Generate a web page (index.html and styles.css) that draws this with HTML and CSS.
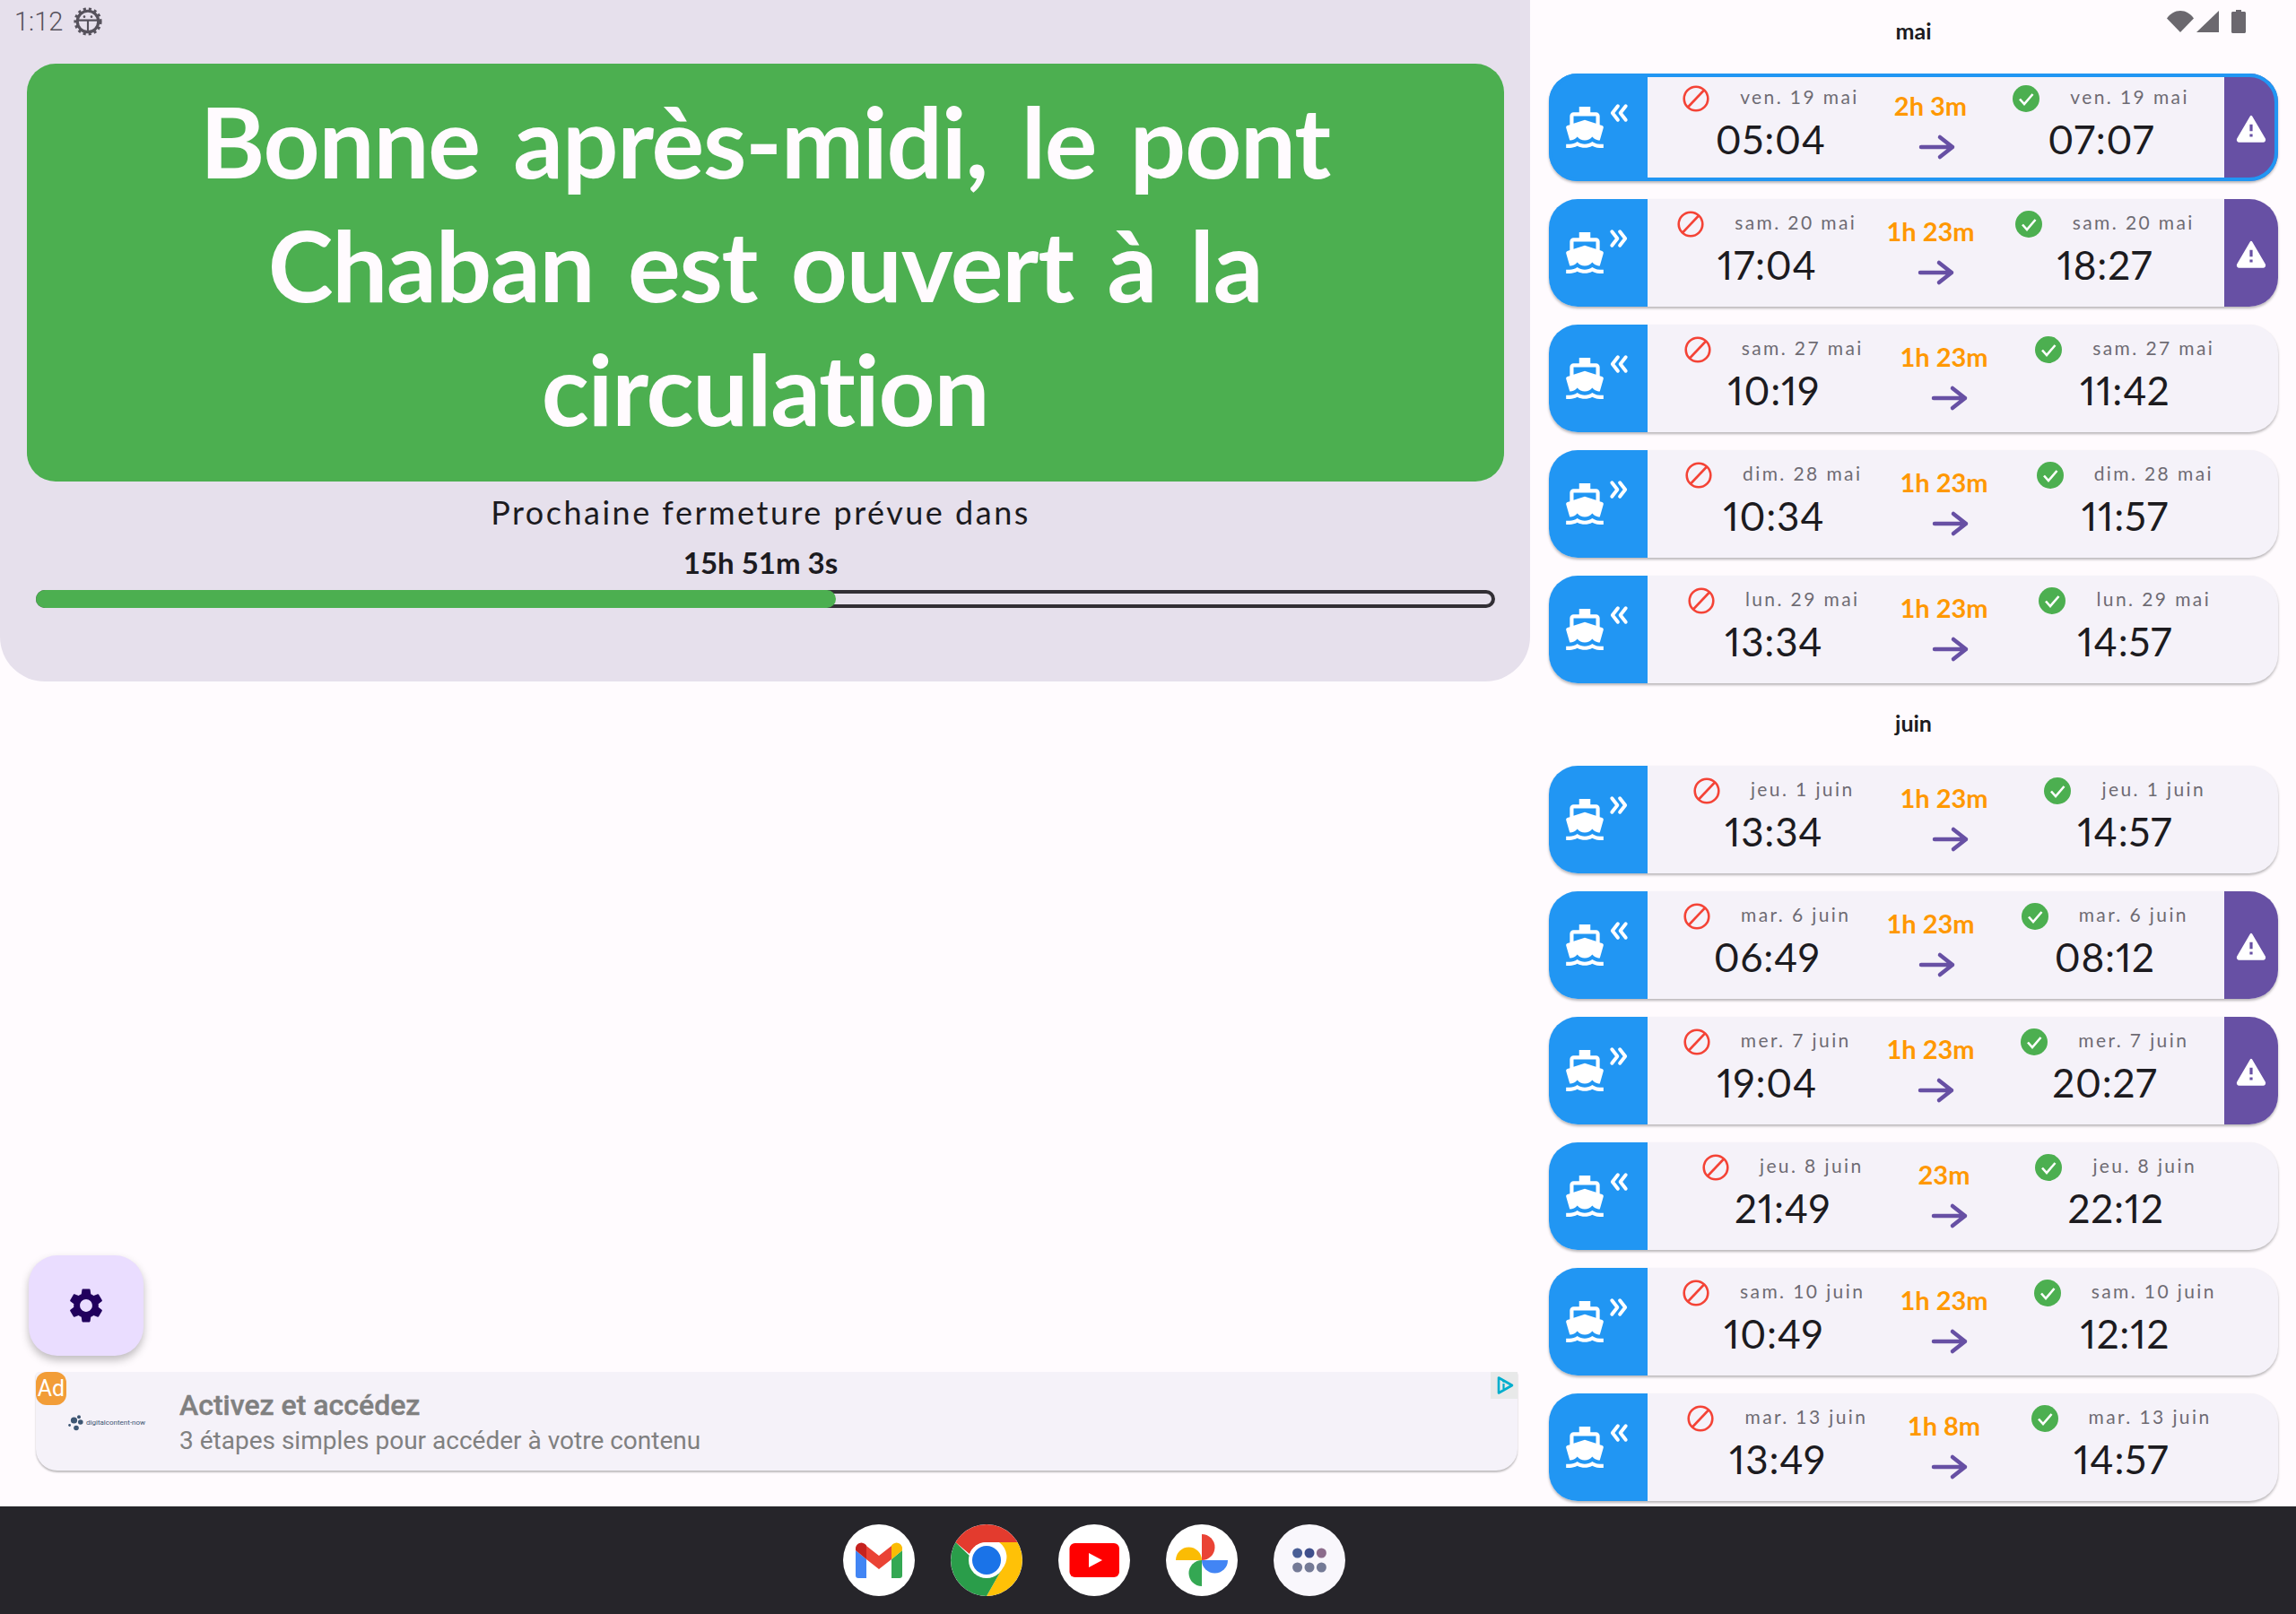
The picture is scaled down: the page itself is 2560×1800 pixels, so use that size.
FILE: index.html
```html
<!DOCTYPE html>
<html lang="fr">
<head>
<meta charset="utf-8">
<title>Pont Chaban</title>
<link rel="stylesheet" href="styles.css">
</head>
<body>
<svg class="defs" width="0" height="0">
  <defs>
    <symbol id="boat" viewBox="0 0 24 24"><path fill="#fff" d="M20 21c-1.390 0-2.780-.47-4-1.320-2.440 1.710-5.560 1.710-8 0C6.780 20.530 5.390 21 4 21H2v2h2c1.380 0 2.740-.35 4-.99 2.520 1.290 5.480 1.290 8 0 1.260.65 2.620.99 4 .99h2v-2h-2zM3.950 19H4c1.600 0 3.020-.88 4-2 .98 1.120 2.400 2 4 2s3.020-.88 4-2c.98 1.120 2.400 2 4 2h.05l1.890-6.680c.08-.26.060-.54-.060-.78s-.34-.42-.6-.5L20 10.620V6c0-1.100-.9-2-2-2h-3V1H9v3H6c-1.100 0-2 .9-2 2v4.620l-1.290.42c-.26.080-.48.260-.6.500s-.15.520-.06.780L3.950 19zM6 6h12v3.970L12 8 6 9.970V6z"/></symbol>
    <symbol id="no" viewBox="0 0 30 30"><circle cx="15" cy="15" r="13.300" fill="none" stroke="#F44336" stroke-width="2.600"/><path d="M6 24.500 24 5.500" stroke="#F44336" stroke-width="2.600"/></symbol>
    <symbol id="ok" viewBox="0 0 30 30"><circle cx="15" cy="15" r="15" fill="#4CAF50"/><path d="M8 15.500l5 5.500 9.500-11" fill="none" stroke="#fff" stroke-width="2.600"/></symbol>
    <symbol id="arr" viewBox="0 0 42 30"><path d="M3 15h35M24 4l14 11-14 11" fill="none" stroke="#6750A4" stroke-width="4.500" stroke-linecap="round" stroke-linejoin="round"/></symbol>
    <symbol id="warn" viewBox="0 0 32 30"><path d="M16 3 29.800 26.500c.5 1-.2 2-1.300 2H3.500c-1.100 0-1.800-1-1.300-2z" fill="#fff" stroke="#fff" stroke-width="2.500" stroke-linejoin="round"/><path d="M14.500 11h3v7h-3zM14.500 21h3v3h-3z" fill="#6750A4"/></symbol>
    <symbol id="left" viewBox="0 0 20 20"><path d="M9 3 3.500 10 9 17M17 3l-5.500 7 5.500 7" fill="none" stroke="#fff" stroke-width="3.600" stroke-linecap="round" stroke-linejoin="round"/></symbol>
    <symbol id="right" viewBox="0 0 20 20"><path d="M3 3l5.500 7L3 17M11 3l5.500 7L11 17" fill="none" stroke="#fff" stroke-width="3.600" stroke-linecap="round" stroke-linejoin="round"/></symbol>
  </defs>
</svg>

<div class="status">
  <div class="status-left">
    <span class="clock">1:12</span>
    <svg class="bug" viewBox="0 0 24 24"><circle cx="12" cy="12" r="8.800" fill="none" stroke="#56525C" stroke-width="2.400"/><circle cx="12" cy="12" r="10.200" fill="none" stroke="#56525C" stroke-width="3" stroke-dasharray="2.200 2.200"/><path d="M3.500 11h17M12 11v9" stroke="#56525C" stroke-width="1.600"/><circle cx="9" cy="8" r="1" fill="#56525C"/><circle cx="15" cy="8" r="1" fill="#56525C"/></svg>
  </div>
  <div class="status-right">
    <svg class="st-wifi" viewBox="0 0 30 24"><path d="M0 8.500C4 3 9 0 15 0s11 3 15 8.500L15 24z" fill="#6B686E"/></svg>
    <svg class="st-signal" viewBox="0 0 25 24"><path d="M25 0v24H0z" fill="#6B686E"/></svg>
    <svg class="st-batt" viewBox="0 0 16 26"><path d="M5 0h6v2h3.500c.8 0 1.500.7 1.500 1.500v21c0 .8-.7 1.500-1.500 1.500h-13C.7 26 0 25.300 0 24.500v-21C0 2.700.7 2 1.500 2H5z" fill="#6B686E"/></svg>
  </div>
</div>

<main class="main">
  <section class="left">
    <div class="panel">
      <div class="hero">Bonne après-midi, le pont Chaban est ouvert à la circulation</div>
      <div class="next">Prochaine fermeture prévue dans</div>
      <div class="count">15h 51m 3s</div>
      <div class="bar"><div class="fill"></div></div>
    </div>
    <div class="spacer"></div>
    <button class="fab"><svg viewBox="0 0 24 24"><path fill="#21005D" d="M19.140 12.940c.04-.3.060-.61.060-.94 0-.32-.02-.64-.07-.94l2.030-1.580a.49.49 0 0 0 .12-.61l-1.920-3.320a.488.488 0 0 0-.59-.22l-2.390.96c-.5-.38-1.030-.7-1.620-.94l-.36-2.540a.484.484 0 0 0-.48-.41h-3.840c-.24 0-.43.170-.47.41l-.36 2.540c-.59.24-1.130.57-1.620.94l-2.390-.96c-.22-.08-.47 0-.59.22L2.740 8.870c-.12.21-.08.47.12.61l2.030 1.580c-.05.3-.09.63-.09.94s.02.640.07.940l-2.030 1.580a.49.49 0 0 0-.12.610l1.920 3.320c.12.220.37.290.59.220l2.390-.96c.5.380 1.030.7 1.620.94l.36 2.540c.05.240.24.410.48.410h3.840c.24 0 .44-.170.47-.41l.36-2.540c.59-.24 1.130-.56 1.620-.94l2.390.96c.22.080.47 0 .59-.22l1.920-3.320c.12-.22.070-.47-.12-.61l-2.010-1.580zM12 15.600c-1.980 0-3.600-1.620-3.600-3.600s1.620-3.600 3.600-3.600 3.600 1.620 3.600 3.600-1.620 3.600-3.600 3.600z"/></svg></button>
    <div class="ad">
      <span class="ad-badge">Ad</span>
      <div class="ad-choice"><svg viewBox="0 0 20 22"><path d="M3 2.500v17L18 11z" fill="none" stroke="#00AECD" stroke-width="2.600" stroke-linejoin="round"/><path d="M8.500 9v6" stroke="#00AECD" stroke-width="2.200"/><circle cx="8.500" cy="6.500" r="1.300" fill="#00AECD"/></svg></div>
      <div class="ad-logo">
        <svg viewBox="0 0 17 18"><g fill="#3D5673"><circle cx="12" cy="2.200" r="2"/><circle cx="6.500" cy="6" r="3.600"/><circle cx="13.800" cy="8" r="2.800"/><circle cx="1.600" cy="11.500" r="1.400"/><circle cx="9" cy="14.500" r="2.800"/></g></svg>
        <span>digitalcontent<i>-</i>now</span>
      </div>
      <div class="ad-text">
        <div class="ad-title">Activez et accédez</div>
        <div class="ad-sub">3 étapes simples pour accéder à votre contenu</div>
      </div>
    </div>
  </section>

  <section class="right">
    <div class="month first">mai</div>
    <article class="card sel warned"><div class="side"><svg class="boat"><use href="#boat"/></svg><svg class="dir"><use href="#left"/></svg></div><div class="mid"><div class="block"><div class="top"><svg class="ic"><use href="#no"/></svg><span class="date">ven. 19 mai</span></div><div class="time">05:04</div></div><div class="dur"><div class="len">2h 3m</div><svg class="arrow"><use href="#arr"/></svg></div><div class="block"><div class="top"><svg class="ic"><use href="#ok"/></svg><span class="date">ven. 19 mai</span></div><div class="time">07:07</div></div></div><div class="alert"><svg><use href="#warn"/></svg></div></article>
    <article class="card warned"><div class="side"><svg class="boat"><use href="#boat"/></svg><svg class="dir"><use href="#right"/></svg></div><div class="mid"><div class="block"><div class="top"><svg class="ic"><use href="#no"/></svg><span class="date">sam. 20 mai</span></div><div class="time">17:04</div></div><div class="dur"><div class="len">1h 23m</div><svg class="arrow"><use href="#arr"/></svg></div><div class="block"><div class="top"><svg class="ic"><use href="#ok"/></svg><span class="date">sam. 20 mai</span></div><div class="time">18:27</div></div></div><div class="alert"><svg><use href="#warn"/></svg></div></article>
    <article class="card"><div class="side"><svg class="boat"><use href="#boat"/></svg><svg class="dir"><use href="#left"/></svg></div><div class="mid"><div class="block"><div class="top"><svg class="ic"><use href="#no"/></svg><span class="date">sam. 27 mai</span></div><div class="time">10:19</div></div><div class="dur"><div class="len">1h 23m</div><svg class="arrow"><use href="#arr"/></svg></div><div class="block"><div class="top"><svg class="ic"><use href="#ok"/></svg><span class="date">sam. 27 mai</span></div><div class="time">11:42</div></div></div></article>
    <article class="card"><div class="side"><svg class="boat"><use href="#boat"/></svg><svg class="dir"><use href="#right"/></svg></div><div class="mid"><div class="block"><div class="top"><svg class="ic"><use href="#no"/></svg><span class="date">dim. 28 mai</span></div><div class="time">10:34</div></div><div class="dur"><div class="len">1h 23m</div><svg class="arrow"><use href="#arr"/></svg></div><div class="block"><div class="top"><svg class="ic"><use href="#ok"/></svg><span class="date">dim. 28 mai</span></div><div class="time">11:57</div></div></div></article>
    <article class="card"><div class="side"><svg class="boat"><use href="#boat"/></svg><svg class="dir"><use href="#left"/></svg></div><div class="mid"><div class="block"><div class="top"><svg class="ic"><use href="#no"/></svg><span class="date">lun. 29 mai</span></div><div class="time">13:34</div></div><div class="dur"><div class="len">1h 23m</div><svg class="arrow"><use href="#arr"/></svg></div><div class="block"><div class="top"><svg class="ic"><use href="#ok"/></svg><span class="date">lun. 29 mai</span></div><div class="time">14:57</div></div></div></article>
    <div class="month">juin</div>
    <article class="card"><div class="side"><svg class="boat"><use href="#boat"/></svg><svg class="dir"><use href="#right"/></svg></div><div class="mid"><div class="block"><div class="top"><svg class="ic"><use href="#no"/></svg><span class="date">jeu. 1 juin</span></div><div class="time">13:34</div></div><div class="dur"><div class="len">1h 23m</div><svg class="arrow"><use href="#arr"/></svg></div><div class="block"><div class="top"><svg class="ic"><use href="#ok"/></svg><span class="date">jeu. 1 juin</span></div><div class="time">14:57</div></div></div></article>
    <article class="card warned"><div class="side"><svg class="boat"><use href="#boat"/></svg><svg class="dir"><use href="#left"/></svg></div><div class="mid"><div class="block"><div class="top"><svg class="ic"><use href="#no"/></svg><span class="date">mar. 6 juin</span></div><div class="time">06:49</div></div><div class="dur"><div class="len">1h 23m</div><svg class="arrow"><use href="#arr"/></svg></div><div class="block"><div class="top"><svg class="ic"><use href="#ok"/></svg><span class="date">mar. 6 juin</span></div><div class="time">08:12</div></div></div><div class="alert"><svg><use href="#warn"/></svg></div></article>
    <article class="card warned"><div class="side"><svg class="boat"><use href="#boat"/></svg><svg class="dir"><use href="#right"/></svg></div><div class="mid"><div class="block"><div class="top"><svg class="ic"><use href="#no"/></svg><span class="date">mer. 7 juin</span></div><div class="time">19:04</div></div><div class="dur"><div class="len">1h 23m</div><svg class="arrow"><use href="#arr"/></svg></div><div class="block"><div class="top"><svg class="ic"><use href="#ok"/></svg><span class="date">mer. 7 juin</span></div><div class="time">20:27</div></div></div><div class="alert"><svg><use href="#warn"/></svg></div></article>
    <article class="card"><div class="side"><svg class="boat"><use href="#boat"/></svg><svg class="dir"><use href="#left"/></svg></div><div class="mid"><div class="block"><div class="top"><svg class="ic"><use href="#no"/></svg><span class="date">jeu. 8 juin</span></div><div class="time">21:49</div></div><div class="dur"><div class="len">23m</div><svg class="arrow"><use href="#arr"/></svg></div><div class="block"><div class="top"><svg class="ic"><use href="#ok"/></svg><span class="date">jeu. 8 juin</span></div><div class="time">22:12</div></div></div></article>
    <article class="card"><div class="side"><svg class="boat"><use href="#boat"/></svg><svg class="dir"><use href="#right"/></svg></div><div class="mid"><div class="block"><div class="top"><svg class="ic"><use href="#no"/></svg><span class="date">sam. 10 juin</span></div><div class="time">10:49</div></div><div class="dur"><div class="len">1h 23m</div><svg class="arrow"><use href="#arr"/></svg></div><div class="block"><div class="top"><svg class="ic"><use href="#ok"/></svg><span class="date">sam. 10 juin</span></div><div class="time">12:12</div></div></div></article>
    <article class="card"><div class="side"><svg class="boat"><use href="#boat"/></svg><svg class="dir"><use href="#left"/></svg></div><div class="mid"><div class="block"><div class="top"><svg class="ic"><use href="#no"/></svg><span class="date">mar. 13 juin</span></div><div class="time">13:49</div></div><div class="dur"><div class="len">1h 8m</div><svg class="arrow"><use href="#arr"/></svg></div><div class="block"><div class="top"><svg class="ic"><use href="#ok"/></svg><span class="date">mar. 13 juin</span></div><div class="time">14:57</div></div></div></article>
  </section>
</main>

<nav class="dock">
  <div class="app"><svg viewBox="0 0 80 80"><path d="M14 29 26 39V60H17a3 3 0 0 1-3-3z" fill="#4285F4"/><path d="M66 29 54 39V60H63a3 3 0 0 0 3-3z" fill="#34A853"/><path d="M26 24 40 35 54 24V39L40 50 26 39z" fill="#EA4335"/><path d="M14 26a6.500 6.500 0 0 1 10.500-4L26 23.500V39L14 29z" fill="#C5221F"/><path d="M66 26a6.500 6.500 0 0 0-10.500-4L54 23.500V39L66 29z" fill="#FBBC04"/></svg></div>
  <div class="app"><svg viewBox="0 0 80 80"><path d="M40 0a40 40 0 0 1 34.600 20H40a20 20 0 0 0-19 13L5.400 20A40 40 0 0 1 40 0z" fill="#E33B2E"/><path d="M74.600 20A40 40 0 0 1 40 80l17-30a20 20 0 0 0-3-30z" fill="#FFC107"/><path d="M5.400 20A40 40 0 0 0 40 80l17-30a20 20 0 0 1-36-15z" fill="#2A9D4A"/><circle cx="40" cy="40" r="20" fill="#fff"/><circle cx="40" cy="40" r="16" fill="#1A73E8"/></svg></div>
  <div class="app"><svg viewBox="0 0 80 80"><rect x="12.500" y="21" width="55.500" height="38" rx="6" fill="#F00"/><path d="M34 32v16l15-8z" fill="#fff"/></svg></div>
  <div class="app"><svg viewBox="0 0 80 80"><path d="M40 11a14.500 14.500 0 0 1 0 29z" fill="#EA4335"/><path d="M40 40h29a14.500 14.500 0 0 1-29 0z" fill="#4285F4"/><path d="M40 40v29a14.500 14.500 0 0 1 0-29z" fill="#34A853"/><path d="M11 40a14.500 14.500 0 0 1 29 0z" fill="#FBBC04"/></svg></div>
  <div class="app apps"><svg viewBox="0 0 80 80"><circle cx="26.600" cy="32" r="5.500" fill="#4A5F96"/><circle cx="40" cy="32" r="5.500" fill="#3F4F8C"/><circle cx="53.400" cy="32" r="5.500" fill="#8C6C8C"/><circle cx="26.600" cy="48" r="5.500" fill="#747A96"/><circle cx="40" cy="48" r="5.500" fill="#747A96"/><circle cx="53.400" cy="48" r="5.500" fill="#747A96"/></svg></div>
</nav>
</body>
</html>
```

FILE: styles.css
```css
* { box-sizing: border-box; }
html, body { margin: 0; padding: 0; }
body {
  position: relative;
  width: 2560px;
  height: 1800px;
  display: flex;
  flex-direction: column;
  background: #FFFBFE;
  font-family: "Lato", "Noto Sans", sans-serif;
  font-variant-ligatures: none;
  color: #1C1B1F;
  overflow: hidden;
}
.defs { position: absolute; }

/* status bar overlay */
.status {
  position: absolute;
  top: 0; left: 0; right: 0;
  height: 48px;
  display: flex;
  justify-content: space-between;
  z-index: 3;
}
.status-left { display: flex; align-items: center; gap: 12px; padding-left: 16px; height: 48px; }
.clock { font-family: "Roboto", sans-serif; font-weight: 300; font-size: 29px; color: #56525C; }
.bug { width: 32px; height: 32px; }
.status-right { display: flex; align-items: flex-start; padding: 11px 56px 0 0; }
.st-wifi { width: 30px; height: 24px; margin: 1px 3px 0 0; }
.st-signal { width: 25px; height: 24px; margin: 1px 14px 0 0; }
.st-batt { width: 16px; height: 26px; }

.main { height: 1680px; flex: none; display: flex; }

/* left column */
.left { width: 1706px; flex: none; display: flex; flex-direction: column; }
.panel {
  height: 760px;
  flex: none;
  background: #E6E0EC;
  border-radius: 0 0 50px 50px;
  padding: 71px 30px 0;
  display: flex;
  flex-direction: column;
  align-items: center;
}
.hero {
  width: 1647px;
  height: 466px;
  flex: none;
  background: #4CAF50;
  border-radius: 32px;
  color: #FFFBFE;
  font-size: 110px;
  font-weight: 700;
  letter-spacing: -1.200px;
  word-spacing: 12px;
  line-height: 138px;
  text-align: center;
  padding: 16px 90px 0;
}
.next { margin: 10px 10px 0 0; font-size: 36px; line-height: 48px; letter-spacing: 2.500px; }
.count { margin: 10px 10px 0 0; font-size: 33px; line-height: 44px; font-weight: 700; }
.bar {
  margin-top: 9px;
  width: 1627px;
  height: 20px;
  flex: none;
  border: 4px solid #322F35;
  border-radius: 10px;
  position: relative;
}
.fill {
  position: absolute;
  left: -4px; top: -4px; bottom: -4px;
  width: 892px;
  background: #4CAF50;
  border-radius: 10px;
}
.spacer { flex: 1; }
.fab {
  align-self: flex-start;
  margin-left: 32px;
  width: 128px;
  height: 112px;
  flex: none;
  border: 0;
  padding: 0;
  border-radius: 32px;
  background: #EADDFF;
  box-shadow: 0 5px 10px rgba(0,0,0,.25);
  display: flex;
  align-items: center;
  justify-content: center;
}
.fab svg { width: 46px; height: 46px; }
.ad {
  position: relative;
  margin: 18px 14px 40px 40px;
  height: 110px;
  flex: none;
  background: #F5F2F9;
  border-radius: 4px 0 24px 24px;
  box-shadow: 0 2px 2px rgba(0,0,0,.25);
  display: flex;
  align-items: center;
  color: #808080;
  font-family: "Roboto", sans-serif;
}
.ad-badge {
  position: absolute;
  left: 0; top: 0;
  width: 34px; height: 37px;
  border-radius: 12px;
  background: #F29D38;
  color: #fff;
  font-size: 25px;
  line-height: 37px;
  text-align: center;
}
.ad-choice {
  position: absolute;
  right: 0; top: 0;
  width: 30px; height: 30px;
  background: #E8E9E9;
  padding: 4px 4px 4px 6px;
}
.ad-choice svg { display: block; width: 20px; height: 22px; }
.ad-logo { width: 160px; flex: none; padding-left: 36px; padding-top: 3px; display: flex; align-items: center; gap: 3px; font-size: 8px; color: #3D5673; white-space: nowrap; }
.ad-logo svg { width: 17px; height: 18px; flex: none; }
.ad-logo i { font-style: normal; }
.ad-title { font-size: 32px; font-weight: 500; -webkit-text-stroke: .4px #808080; line-height: 40px; margin-top: 2px; }
.ad-sub { font-size: 28px; line-height: 36px; margin-top: 2px; }

/* right column */
.right { flex: 1; padding: 0 20px 0 21px; display: flex; flex-direction: column; gap: 20px; min-width: 0; }
.month { height: 52px; flex: none; line-height: 26px; padding-top: 11px; text-align: center; font-weight: 700; font-size: 25px; }
.month.first { height: 62px; padding-top: 21px; }
.card {
  height: 120px;
  flex: none;
  display: flex;
  background: #F5F2F9;
  border-radius: 32px;
  box-shadow: 0 2px 3px rgba(0,0,0,.28);
  position: relative;
}
.card.sel::after {
  content: "";
  position: absolute;
  inset: 0;
  border: 4px solid #2196F3;
  border-radius: 32px;
}
.side { width: 110px; flex: none; background: #2196F3; position: relative; border-radius: 32px 0 0 32px; }
.boat { position: absolute; left: 15px; top: 35px; width: 50px; height: 50px; }
.dir { position: absolute; left: 67px; top: 33px; width: 22px; height: 22px; }
.mid { flex: 1; display: flex; justify-content: space-evenly; align-items: stretch; min-width: 0; padding-right: 30px; }
.warned .mid { padding-right: 0; }
.alert { width: 60px; flex: none; background: #6750A4; display: flex; align-items: center; justify-content: center; border-radius: 0 32px 32px 0; }
.alert svg { width: 34px; height: 32px; margin-top: 2px; }
.block { display: flex; flex-direction: column; align-items: center; }
.top { display: flex; align-items: center; gap: 34px; height: 30px; margin-top: 13px; }
.ic { width: 30px; height: 30px; flex: none; }
.date { font-size: 21px; letter-spacing: 2.400px; color: #6E6B73; white-space: nowrap; margin-top: -5px; }
.time { font-size: 44px; line-height: 52px; margin-top: 4px; letter-spacing: .8px; font-variant-numeric: proportional-nums; }
.dur { display: flex; flex-direction: column; align-items: center; margin-right: 12px; }
.len { margin-top: 18px; font-size: 29px; line-height: 36px; font-weight: 700; color: #FF9800; white-space: nowrap; }
.arrow { margin: 13px 0 0 14px; width: 42px; height: 30px; }

/* dock */
.dock {
  height: 120px;
  flex: none;
  background: #26252A;
  display: flex;
  justify-content: center;
  align-items: center;
  gap: 40px;
  padding-right: 120px;
}
.app { width: 80px; height: 80px; border-radius: 50%; background: #fff; overflow: hidden; }
.app svg { width: 80px; height: 80px; display: block; }
.apps { background: #F9F7FC; }
```
